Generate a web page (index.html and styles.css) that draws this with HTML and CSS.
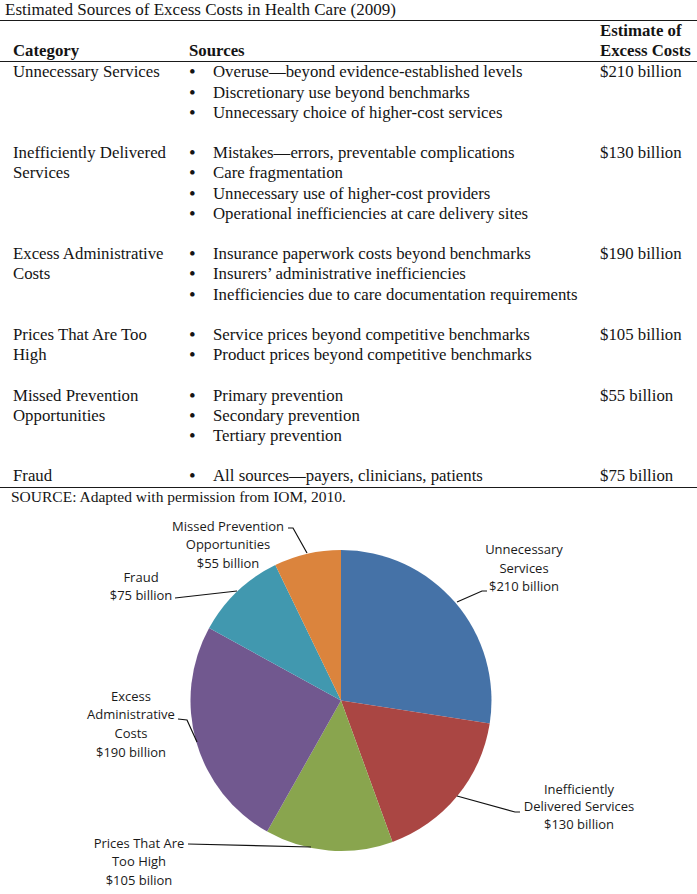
FILE: index.html
```html
<!DOCTYPE html>
<html lang="en">
<head>
<meta charset="utf-8">
<title>Estimated Sources of Excess Costs in Health Care (2009)</title>
<link rel="stylesheet" href="styles.css">
</head>
<body>
<div class="page">
  <div class="title">Estimated Sources of Excess Costs in Health Care (2009)</div>
  <table class="costs">
    <thead>
      <tr>
        <th class="c-cat">Category</th>
        <th class="c-src">Sources</th>
        <th class="c-est">Estimate of<br>Excess Costs</th>
      </tr>
    </thead>
    <tbody>
      <tr>
        <td class="c-cat">Unnecessary Services</td>
        <td class="c-src"><ul>
          <li>Overuse—beyond evidence-established levels</li>
          <li>Discretionary use beyond benchmarks</li>
          <li>Unnecessary choice of higher-cost services</li>
          <li class="blank"></li>
        </ul></td>
        <td class="c-est">$210 billion</td>
      </tr>
      <tr>
        <td class="c-cat">Inefficiently Delivered Services</td>
        <td class="c-src"><ul>
          <li>Mistakes—errors, preventable complications</li>
          <li>Care fragmentation</li>
          <li>Unnecessary use of higher-cost providers</li>
          <li>Operational inefficiencies at care delivery sites</li>
          <li class="blank"></li>
        </ul></td>
        <td class="c-est">$130 billion</td>
      </tr>
      <tr>
        <td class="c-cat">Excess Administrative Costs</td>
        <td class="c-src"><ul>
          <li>Insurance paperwork costs beyond benchmarks</li>
          <li>Insurers’ administrative inefficiencies</li>
          <li>Inefficiencies due to care documentation requirements</li>
          <li class="blank"></li>
        </ul></td>
        <td class="c-est">$190 billion</td>
      </tr>
      <tr>
        <td class="c-cat">Prices That Are Too High</td>
        <td class="c-src"><ul>
          <li>Service prices beyond competitive benchmarks</li>
          <li>Product prices beyond competitive benchmarks</li>
          <li class="blank"></li>
        </ul></td>
        <td class="c-est">$105 billion</td>
      </tr>
      <tr>
        <td class="c-cat">Missed Prevention Opportunities</td>
        <td class="c-src"><ul>
          <li>Primary prevention</li>
          <li>Secondary prevention</li>
          <li>Tertiary prevention</li>
          <li class="blank"></li>
        </ul></td>
        <td class="c-est">$55 billion</td>
      </tr>
      <tr class="last">
        <td class="c-cat">Fraud</td>
        <td class="c-src"><ul>
          <li>All sources—payers, clinicians, patients</li>
        </ul></td>
        <td class="c-est">$75 billion</td>
      </tr>
    </tbody>
  </table>
  <div class="source">SOURCE: Adapted with permission from IOM, 2010.</div>

  <svg class="chart" width="697" height="389" viewBox="0 505 697 389" xmlns="http://www.w3.org/2000/svg">
    <g class="slices">
      <path class="s-blue"   d="M341 699.5 L341 549 A150.5 150.5 0 0 1 489.7 722.6 Z"/>
      <path class="s-red"    d="M341 699.5 L489.7 722.6 A150.5 150.5 0 0 1 392.5 840.9 Z"/>
      <path class="s-green"  d="M341 699.5 L392.5 840.9 A150.5 150.5 0 0 1 267.1 830.6 Z"/>
      <path class="s-purple" d="M341 699.5 L267.1 830.6 A150.5 150.5 0 0 1 209.1 627.0 Z"/>
      <path class="s-teal"   d="M341 699.5 L209.1 627.0 A150.5 150.5 0 0 1 275.3 564.1 Z"/>
      <path class="s-orange" d="M341 699.5 L275.3 564.1 A150.5 150.5 0 0 1 341 549 Z"/>
    </g>
    <g class="leaders">
      <polyline points="487,590 482,590 457,601"/>
      <polyline points="457,795 515,811 520,811"/>
      <polyline points="188,843 311,846"/>
      <polyline points="178,718 187,719 197,741"/>
      <polyline points="175,597 237,590"/>
      <polyline points="288,527 293,527 307,552"/>
    </g>
    <g class="labels">
      <text x="524" y="552.5">Unnecessary</text>
      <text x="524" y="571.5">Services</text>
      <text x="524" y="589.5">$210 billion</text>

      <text x="579" y="792.5">Inefficiently</text>
      <text x="579" y="809.5">Delivered Services</text>
      <text x="579" y="827.5">$130 billion</text>

      <text x="139" y="846.5">Prices That Are</text>
      <text x="139" y="864.5">Too High</text>
      <text x="139" y="883.5">$105 bilion</text>

      <text x="131" y="699.5">Excess</text>
      <text x="131" y="717.5">Administrative</text>
      <text x="131" y="736.5">Costs</text>
      <text x="131" y="755.5">$190 billion</text>

      <text x="141" y="580.5">Fraud</text>
      <text x="141" y="598.5">$75 billion</text>

      <text x="228" y="529.5">Missed Prevention</text>
      <text x="228" y="547.5">Opportunities</text>
      <text x="228" y="566.5">$55 billion</text>
    </g>
  </svg>
</div>
</body>
</html>
```

FILE: styles.css
```css
html, body {
  margin: 0;
  padding: 0;
  background: #ffffff;
}

.page {
  width: 697px;
  font-family: "Liberation Serif", "Times New Roman", serif;
  font-size: 16.8px;
  color: #141414;
}

.title {
  font-size: 17px;
  line-height: 20px;
  padding-left: 5px;
  border-bottom: 1.5px solid #1a1a1a;
}

.costs {
  width: 697px;
  border-collapse: collapse;
  table-layout: fixed;
  line-height: 20.2px;
}

.costs th,
.costs td {
  padding: 0;
  vertical-align: top;
  text-align: left;
}

.costs th {
  font-weight: bold;
  vertical-align: bottom;
}

.costs thead tr {
  border-bottom: 1.5px solid #1a1a1a;
}

.costs tr.last {
  border-bottom: 1.5px solid #1a1a1a;
}

.c-cat {
  width: 160px;
  padding-left: 13px !important;
}

.c-src {
  width: 411px;
  padding-left: 16px !important;
}

.c-est {
  padding-left: 0;
}

.costs ul {
  list-style: none;
  margin: 0;
  padding: 0;
}

.costs li {
  display: flex;
}

.costs li::before {
  content: "•";
  flex: 0 0 24px;
  font-size: 19px;
  line-height: 20.2px;
}

.costs li.blank {
  height: 20.2px;
}

.costs li.blank::before {
  content: "";
}

.source {
  font-size: 15.5px;
  line-height: 18px;
  padding-left: 11px;
}

.chart {
  display: block;
}

.slices path {
  stroke: none;
}

.s-blue   { fill: #4572a7; }
.s-red    { fill: #aa4643; }
.s-green  { fill: #89a54e; }
.s-purple { fill: #71588f; }
.s-teal   { fill: #4198af; }
.s-orange { fill: #db843d; }

.leaders polyline {
  fill: none;
  stroke: #111111;
  stroke-width: 1.2;
}

.labels text {
  font-family: "Open Sans", "Noto Sans", sans-serif;
  font-size: 13px;
  fill: #1a1a1a;
  text-anchor: middle;
}
```
